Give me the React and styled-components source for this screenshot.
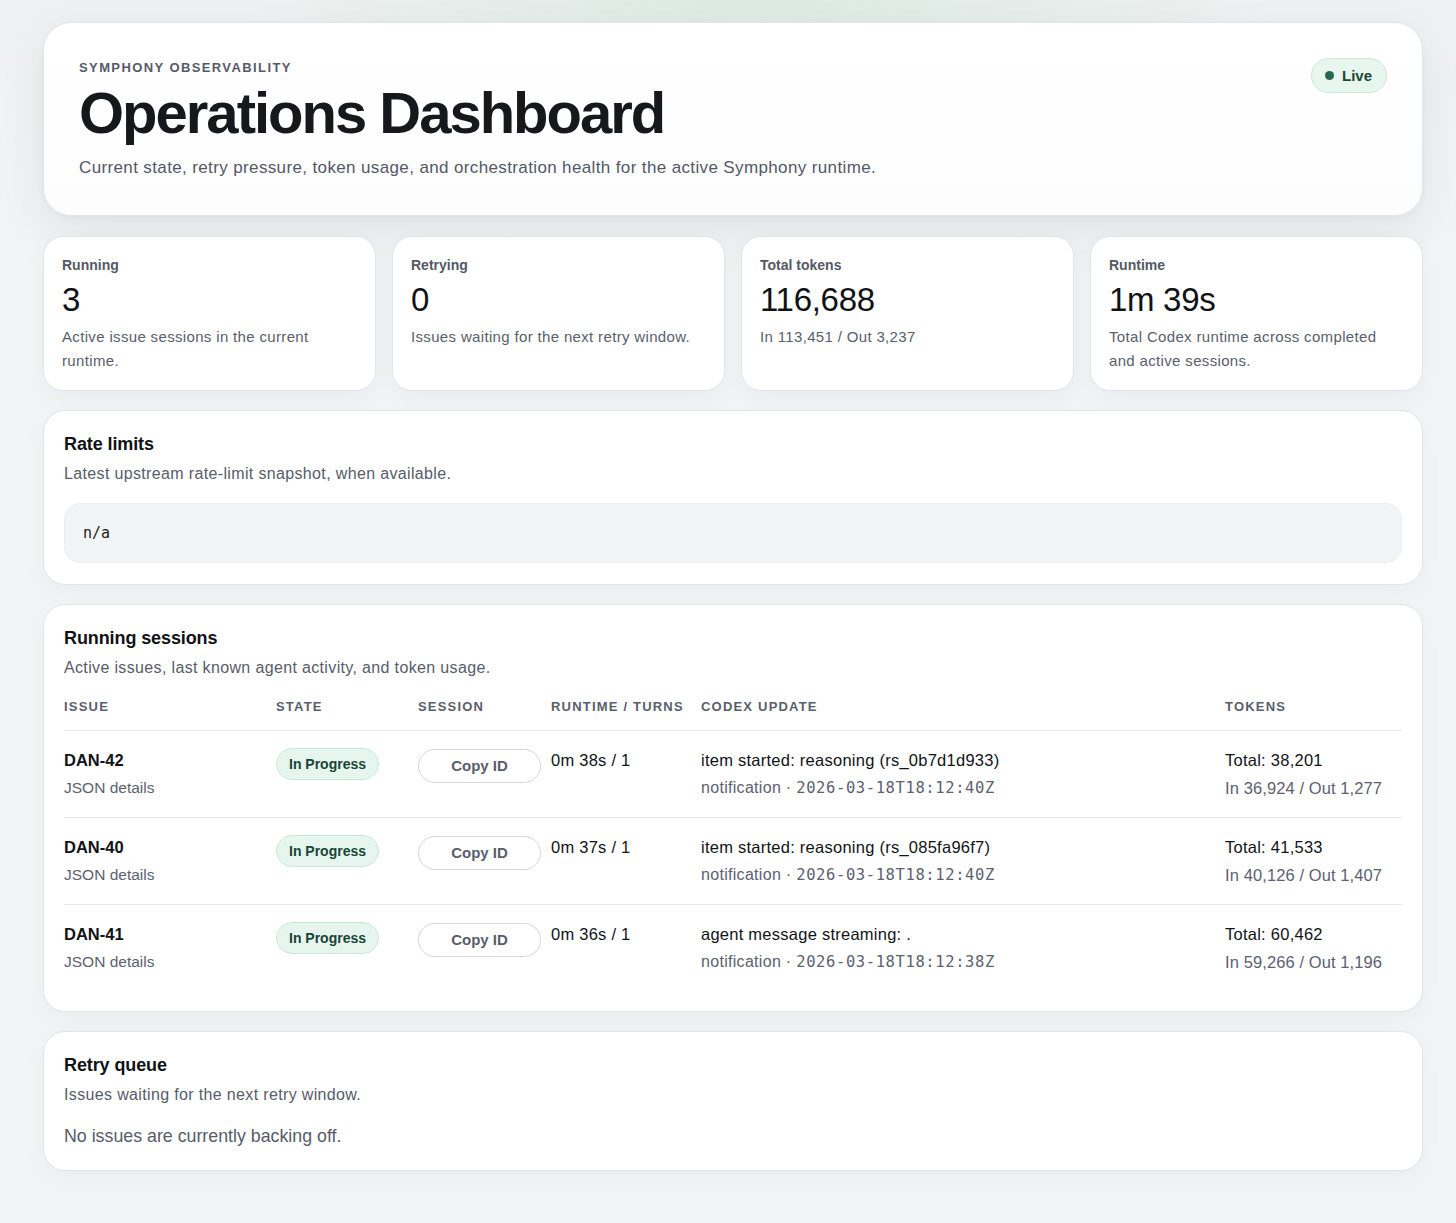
import React from "react";
import styled, { createGlobalStyle } from "styled-components";

const GlobalStyle = createGlobalStyle`
  * { box-sizing: border-box; }
  html, body { margin: 0; padding: 0; }
  body {
    background: #f3f4f6;
    font-family: "Liberation Sans", Arial, Helvetica, sans-serif;
    color: #15161b;
  }
`;

const Page = styled.div`
  min-height: 1223px;
  background:
    radial-gradient(ellipse 520px 120px at 760px 0px, rgba(205, 228, 216, 0.55), rgba(205, 228, 216, 0) 100%),
    linear-gradient(180deg, #eef1f1 0px, #f3f4f6 260px);
  padding: 22px 33px 40px 43px;
`;

const Stack = styled.main`
  width: 1380px;
  display: flex;
  flex-direction: column;
  gap: 19px;
`;

const Hero = styled.header`
  background: linear-gradient(180deg, #ffffff 0%, #fdfdfd 100%);
  border: 1px solid #e2e4e9;
  border-radius: 28px;
  padding: 35px 35px 35px 35px;
  display: flex;
  justify-content: space-between;
  align-items: flex-start;
  margin-bottom: 1px;
  box-shadow: 0 18px 48px rgba(30, 45, 50, 0.08), 0 2px 6px rgba(30, 45, 50, 0.03);
`;

const HeroText = styled.div`
  display: flex;
  flex-direction: column;
  padding-top: 2px;
`;

const Eyebrow = styled.div`
  font-size: 13px;
  line-height: 16px;
  font-weight: 700;
  letter-spacing: 1.4px;
  text-transform: uppercase;
  color: #565a68;
`;

const Title = styled.h1`
  margin: 8px 0 0;
  font-size: 58px;
  line-height: 58px;
  font-weight: 700;
  letter-spacing: -2px;
  color: #17181c;
`;

const Lead = styled.p`
  margin: 12.5px 0 0;
  font-size: 17px;
  line-height: 25px;
  letter-spacing: 0.37px;
  color: #545866;
`;

const LiveBadge = styled.span`
  display: inline-flex;
  align-items: center;
  gap: 8px;
  height: 35px;
  padding: 0 14px 0 13px;
  border-radius: 999px;
  background: #e7f6ef;
  border: 1px solid #c9eadb;
  color: #1c4636;
  font-size: 15px;
  font-weight: 700;
`;

const Dot = styled.span`
  width: 9px;
  height: 9px;
  border-radius: 50%;
  background: #2b6650;
`;

const Metrics = styled.section`
  display: grid;
  grid-template-columns: repeat(4, 1fr);
  gap: 16px;
`;

const MetricCard = styled.div`
  background: #ffffff;
  border: 1px solid #e2e4e9;
  border-radius: 20px;
  padding: 18px 18px 17px;
  min-height: 155px;
  box-shadow: 0 8px 24px rgba(20, 30, 40, 0.04);
`;

const MetricLabel = styled.div`
  font-size: 14px;
  line-height: 20px;
  font-weight: 700;
  color: #555966;
`;

const MetricValue = styled.div`
  margin-top: 7px;
  font-size: 33px;
  line-height: 36px;
  font-weight: 400;
  letter-spacing: -0.3px;
  color: #111216;
`;

const MetricNote = styled.div`
  margin-top: 7px;
  font-size: 15px;
  line-height: 24px;
  letter-spacing: 0.34px;
  color: #5a5e6b;
`;

const Card = styled.section`
  background: #ffffff;
  border: 1px solid #e2e4e9;
  border-radius: 22px;
  padding: 21px 20px 20px;
  box-shadow: 0 8px 24px rgba(20, 30, 40, 0.035);
`;

const CardTitle = styled.h2`
  margin: 0;
  font-size: 18px;
  line-height: 24px;
  font-weight: 700;
  letter-spacing: -0.1px;
  color: #111216;
`;

const CardSub = styled.p`
  margin: 6px 0 0;
  font-size: 16px;
  line-height: 24px;
  letter-spacing: 0.35px;
  color: #585c69;
`;

const Pre = styled.pre`
  margin: 17px 0 1px;
  height: 60px;
  padding: 0 18px;
  display: flex;
  align-items: center;
  background: #f3f4f6;
  border: 1px solid #eceef1;
  border-radius: 16px;
  font-family: "DejaVu Sans Mono", "Liberation Mono", monospace;
  font-size: 15px;
  color: #1b1c20;
`;

const Table = styled.table`
  width: 100%;
  margin-top: 6px;
  border-collapse: collapse;
  table-layout: fixed;
`;

const Th = styled.th`
  text-align: left;
  padding: 13px 10px 15px 0;
  font-size: 13px;
  line-height: 16px;
  font-weight: 700;
  letter-spacing: 1.2px;
  text-transform: uppercase;
  color: #5a5e6b;
  border-bottom: 1px solid #e7e8ec;
  white-space: nowrap;
`;

const Tr = styled.tr`
  border-bottom: 1px solid #e7e8ec;
  &:last-child { border-bottom: none; }
`;

const Td = styled.td`
  vertical-align: top;
  padding: 15px 10px 15px 0;
`;

const Primary = styled.div`
  font-size: 16.5px;
  line-height: 28px;
  font-weight: ${(p) => (p.$bold ? 700 : 400)};
  letter-spacing: ${(p) => (p.$bold ? "0" : "0.25px")};
  color: #121317;
  white-space: nowrap;
`;

const Secondary = styled.div`
  font-size: ${(p) => p.$size || "15.5px"};
  line-height: 28px;
  letter-spacing: ${(p) => p.$track || "0"};
  color: #5d6170;
  white-space: nowrap;
`;

const Mono = styled.span`
  font-family: "DejaVu Sans Mono", "Liberation Mono", monospace;
  font-size: 15.5px;
  letter-spacing: 0.6px;
  color: #5d6170;
`;

const StateBadge = styled.span`
  display: inline-flex;
  align-items: center;
  height: 32px;
  padding: 0 12px;
  border-radius: 999px;
  background: #e6f6ef;
  border: 1px solid #c8eadb;
  color: #1a4535;
  font-size: 14px;
  font-weight: 700;
  margin-top: 2px;
`;

const CopyButton = styled.button`
  display: inline-flex;
  align-items: center;
  justify-content: center;
  width: 123px;
  height: 34px;
  margin-top: 3px;
  border-radius: 999px;
  background: #ffffff;
  border: 1px solid #d4d6dc;
  color: #5a5e6b;
  font-family: "Liberation Sans", Arial, sans-serif;
  font-size: 15px;
  font-weight: 700;
  cursor: pointer;
`;

const EmptyText = styled.p`
  margin: 16px 0 0;
  font-size: 17.8px;
  line-height: 27px;
  color: #575b68;
`;

const metrics = [
  { label: "Running", value: "3", note: "Active issue sessions in the current runtime." },
  { label: "Retrying", value: "0", note: "Issues waiting for the next retry window." },
  { label: "Total tokens", value: "116,688", note: "In 113,451 / Out 3,237" },
  { label: "Runtime", value: "1m 39s", note: "Total Codex runtime across completed and active sessions." },
];

const sessions = [
  { id: "DAN-42", runtime: "0m 38s / 1", update: "item started: reasoning (rs_0b7d1d933)", ts: "2026-03-18T18:12:40Z", total: "38,201", io: "In 36,924 / Out 1,277" },
  { id: "DAN-40", runtime: "0m 37s / 1", update: "item started: reasoning (rs_085fa96f7)", ts: "2026-03-18T18:12:40Z", total: "41,533", io: "In 40,126 / Out 1,407" },
  { id: "DAN-41", runtime: "0m 36s / 1", update: "agent message streaming: .", ts: "2026-03-18T18:12:38Z", total: "60,462", io: "In 59,266 / Out 1,196" },
];

export default function App() {
  return (
    <>
      <GlobalStyle />
      <Page>
        <Stack>
          <Hero>
            <HeroText>
              <Eyebrow>Symphony Observability</Eyebrow>
              <Title>Operations Dashboard</Title>
              <Lead>
                Current state, retry pressure, token usage, and orchestration health for the active Symphony runtime.
              </Lead>
            </HeroText>
            <LiveBadge>
              <Dot />
              Live
            </LiveBadge>
          </Hero>

          <Metrics>
            {metrics.map((m) => (
              <MetricCard key={m.label}>
                <MetricLabel>{m.label}</MetricLabel>
                <MetricValue>{m.value}</MetricValue>
                <MetricNote>{m.note}</MetricNote>
              </MetricCard>
            ))}
          </Metrics>

          <Card>
            <CardTitle>Rate limits</CardTitle>
            <CardSub>Latest upstream rate-limit snapshot, when available.</CardSub>
            <Pre>n/a</Pre>
          </Card>

          <Card>
            <CardTitle>Running sessions</CardTitle>
            <CardSub>Active issues, last known agent activity, and token usage.</CardSub>
            <Table>
              <colgroup>
                <col style={{ width: "212px" }} />
                <col style={{ width: "142px" }} />
                <col style={{ width: "133px" }} />
                <col style={{ width: "150px" }} />
                <col style={{ width: "524px" }} />
                <col />
              </colgroup>
              <thead>
                <tr>
                  <Th>Issue</Th>
                  <Th>State</Th>
                  <Th>Session</Th>
                  <Th>Runtime / turns</Th>
                  <Th>Codex update</Th>
                  <Th>Tokens</Th>
                </tr>
              </thead>
              <tbody>
                {sessions.map((s) => (
                  <Tr key={s.id}>
                    <Td>
                      <Primary $bold>{s.id}</Primary>
                      <Secondary>JSON details</Secondary>
                    </Td>
                    <Td>
                      <StateBadge>In Progress</StateBadge>
                    </Td>
                    <Td>
                      <CopyButton>Copy ID</CopyButton>
                    </Td>
                    <Td>
                      <Primary>{s.runtime}</Primary>
                    </Td>
                    <Td>
                      <Primary>{s.update}</Primary>
                      <Secondary $size="16px" $track="0.3px">
                        notification · <Mono>{s.ts}</Mono>
                      </Secondary>
                    </Td>
                    <Td>
                      <Primary>Total: {s.total}</Primary>
                      <Secondary $size="16.5px" $track="0.1px">{s.io}</Secondary>
                    </Td>
                  </Tr>
                ))}
              </tbody>
            </Table>
          </Card>

          <Card>
            <CardTitle>Retry queue</CardTitle>
            <CardSub>Issues waiting for the next retry window.</CardSub>
            <EmptyText>No issues are currently backing off.</EmptyText>
          </Card>
        </Stack>
      </Page>
    </>
  );
}
